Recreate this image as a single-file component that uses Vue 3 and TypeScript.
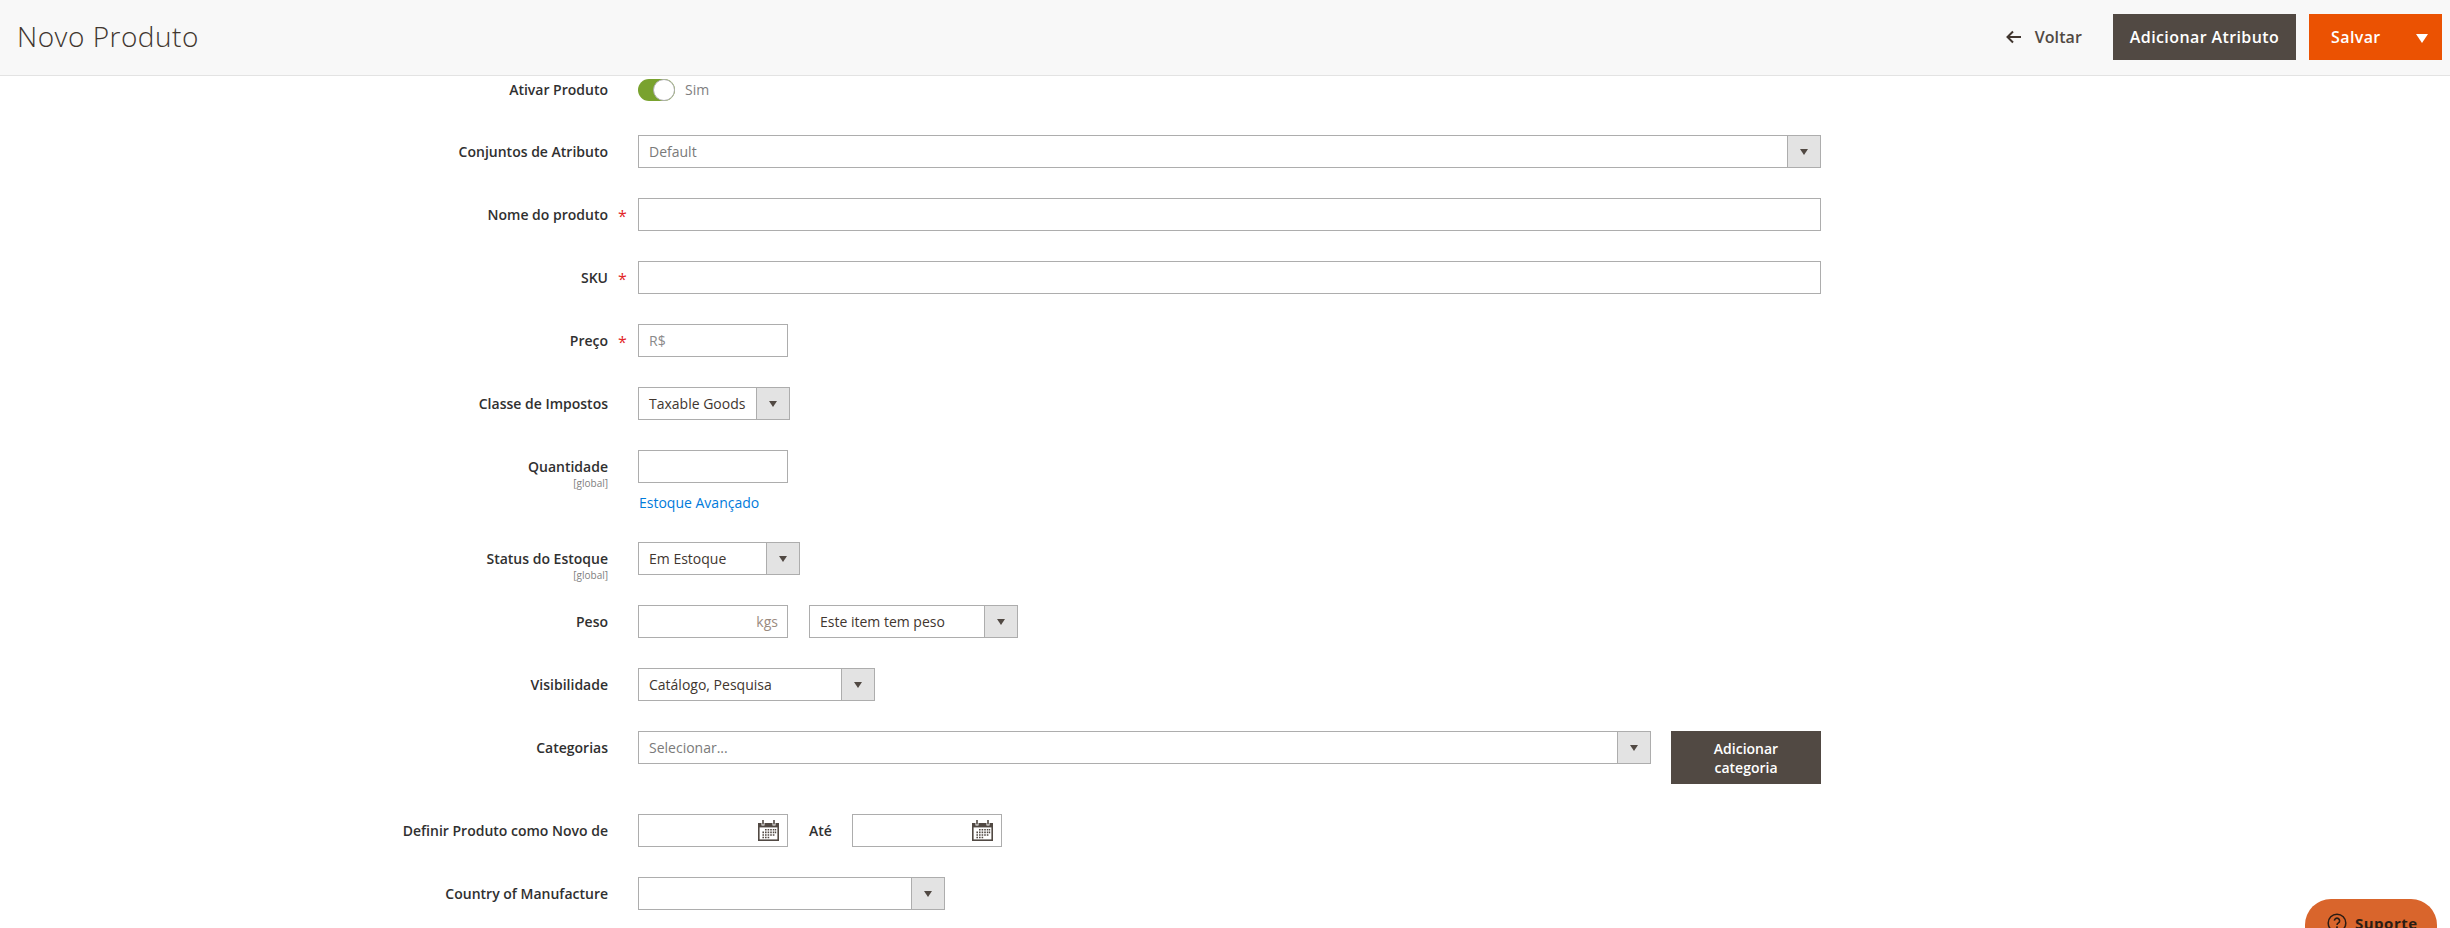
<template>
  <div class="page">
    <header class="page-header">
      <h1 class="title">Novo Produto</h1>
      <div class="actions">
        <a class="back">
          <svg class="back-icon" viewBox="0 0 15 14" width="15" height="14">
            <path d="M7 1.5 1.5 7 7 12.5M2 7h13" fill="none" stroke="#41362f" stroke-width="2" />
          </svg>
          <span>Voltar</span>
        </a>
        <button class="btn btn-dark btn-large">Adicionar Atributo</button>
        <button class="btn btn-save btn-large">
          <span>Salvar</span>
          <i class="save-arrow"></i>
        </button>
      </div>
    </header>

    <form class="form" @submit.prevent>
      <div class="row row-toggle">
        <label class="label">Ativar Produto</label>
        <span class="star"></span>
        <div class="control toggle-wrap">
          <span class="toggle"><i class="knob"></i></span>
          <span class="toggle-text">Sim</span>
        </div>
      </div>

      <div class="row">
        <label class="label">Conjuntos de Atributo</label>
        <span class="star"></span>
        <div class="select w-full">
          <span class="select-value muted">Default</span>
          <span class="select-btn"><i class="arrow"></i></span>
        </div>
      </div>

      <div class="row">
        <label class="label">Nome do produto</label>
        <span class="star">*</span>
        <input class="input w-full" type="text" />
      </div>

      <div class="row">
        <label class="label">SKU</label>
        <span class="star">*</span>
        <input class="input w-full" type="text" />
      </div>

      <div class="row">
        <label class="label">Preço</label>
        <span class="star">*</span>
        <div class="input w-small price">R$</div>
      </div>

      <div class="row">
        <label class="label">Classe de Impostos</label>
        <span class="star"></span>
        <div class="select w-tax">
          <span class="select-value">Taxable Goods</span>
          <span class="select-btn"><i class="arrow"></i></span>
        </div>
      </div>

      <div class="row">
        <div class="label">
          Quantidade
          <small class="scope">[global]</small>
        </div>
        <span class="star"></span>
        <div class="control stacked">
          <input class="input w-small" type="text" />
          <a class="link">Estoque Avançado</a>
        </div>
      </div>

      <div class="row">
        <div class="label">
          Status do Estoque
          <small class="scope">[global]</small>
        </div>
        <span class="star"></span>
        <div class="select w-stock">
          <span class="select-value">Em Estoque</span>
          <span class="select-btn"><i class="arrow"></i></span>
        </div>
      </div>

      <div class="row">
        <label class="label">Peso</label>
        <span class="star"></span>
        <div class="control inline gap-weight">
          <div class="input w-small weight">kgs</div>
          <div class="select w-has-weight">
            <span class="select-value">Este item tem peso</span>
            <span class="select-btn"><i class="arrow"></i></span>
          </div>
        </div>
      </div>

      <div class="row">
        <label class="label">Visibilidade</label>
        <span class="star"></span>
        <div class="select w-visible">
          <span class="select-value">Catálogo, Pesquisa</span>
          <span class="select-btn"><i class="arrow"></i></span>
        </div>
      </div>

      <div class="row">
        <label class="label">Categorias</label>
        <span class="star"></span>
        <div class="control inline w-full categories">
          <div class="select grow">
            <span class="select-value muted">Selecionar...</span>
            <span class="select-btn"><i class="arrow"></i></span>
          </div>
          <button class="btn btn-dark btn-category">Adicionar categoria</button>
        </div>
      </div>

      <div class="row">
        <label class="label">Definir Produto como Novo de</label>
        <span class="star"></span>
        <div class="control inline">
          <div class="input w-small date">
            <svg v-bind="calendar" class="cal">
              <use href="#cal-icon" />
            </svg>
          </div>
          <span class="until">Até</span>
          <div class="input w-small date">
            <svg v-bind="calendar" class="cal">
              <use href="#cal-icon" />
            </svg>
          </div>
        </div>
      </div>

      <div class="row">
        <label class="label">Country of Manufacture</label>
        <span class="star"></span>
        <div class="select w-country">
          <span class="select-value"></span>
          <span class="select-btn"><i class="arrow"></i></span>
        </div>
      </div>
    </form>

    <div class="support">
      <svg width="20" height="20" viewBox="0 0 20 20">
        <circle cx="10" cy="10" r="8.8" fill="none" stroke="#2a1c14" stroke-width="1.5" />
        <path d="M7.4 7.6a2.6 2.6 0 1 1 4 2.3c-.9.6-1.4 1-1.4 2.2" fill="none" stroke="#2a1c14" stroke-width="1.6" />
        <rect x="9.1" y="13.4" width="1.8" height="1.8" fill="#2a1c14" />
      </svg>
      <span>Suporte</span>
    </div>

    <svg class="defs" width="0" height="0">
      <symbol id="cal-icon" viewBox="0 0 21 21">
        <path fill="#514943" d="M0 3h3.5v2.5h3V3h8v2.5h3V3H21v18H0z" />
        <path fill="#514943" d="M4.2 0h1.6v4.6H4.2zM15.2 0h1.6v4.6h-1.6z" />
        <path fill="#fff" d="M1.6 7.4h17.8v12H1.6z" />
        <path fill="#514943" d="M7 9h1.6v1.6H7zM9.6 9h1.6v1.6H9.6zM12.2 9h1.6v1.6h-1.6zM14.8 9h1.6v1.6h-1.6zM17 9h1.2v1.6H17zM4.4 11.6H6v1.6H4.4zM7 11.6h1.6v1.6H7zM9.6 11.6h1.6v1.6H9.6zM12.2 11.6h1.6v1.6h-1.6zM14.8 11.6h1.6v1.6h-1.6zM17 11.6h1.2v1.6H17zM4.4 14.2H6v1.6H4.4zM7 14.2h1.6v1.6H7zM9.6 14.2h1.6v1.6H9.6zM12.2 14.2h1.6v1.6h-1.6zM14.8 14.2h1.6v1.6h-1.6zM4.4 16.8H6v1.4H4.4zM7 16.8h1.6v1.4H7zM9.6 16.8h1.6v1.4H9.6z" />
      </symbol>
    </svg>
  </div>
</template>

<script setup lang="ts">
const calendar = { width: 21, height: 21, viewBox: '0 0 21 21' };
</script>

<style>
html,
body {
  margin: 0;
  background: #fff;
  overflow: hidden;
}
</style>

<style scoped>
.page {
  position: relative;
  width: 2450px;
  height: 928px;
  overflow: hidden;
  font-family: "Open Sans", "Liberation Sans", sans-serif;
  font-size: 14px;
  color: #303030;
  box-sizing: border-box;
}

.page-header {
  display: flex;
  align-items: flex-start;
  justify-content: space-between;
  height: 76px;
  box-sizing: border-box;
  padding: 14px 8px 0 17px;
  background: #f8f8f8;
  border-bottom: 1px solid #e3e3e3;
}

.title {
  margin: 0;
  font-size: 28px;
  font-weight: 300;
  line-height: 44px;
  letter-spacing: 0.5px;
  color: #41362f;
}

.actions {
  display: flex;
  align-items: center;
}

.back {
  display: flex;
  align-items: center;
  gap: 14px;
  margin-right: 31px;
  font-size: 16px;
  font-weight: 600;
  color: #514943;
  letter-spacing: 0.1px;
}

.btn {
  border: 0;
  font-family: inherit;
  font-size: 14px;
  font-weight: 600;
  color: #fff;
  cursor: pointer;
}

.btn-large {
  font-size: 16px;
  letter-spacing: 0.4px;
}

.btn-dark {
  width: 183px;
  height: 46px;
  padding: 0;
  background: #514943;
}

.btn-save {
  display: flex;
  align-items: center;
  justify-content: space-between;
  width: 133px;
  height: 46px;
  margin-left: 13px;
  padding: 0 14px 0 22px;
  background: #eb5202;
}

.save-arrow {
  width: 0;
  height: 0;
  margin-top: 3px;
  border-left: 6px solid transparent;
  border-right: 6px solid transparent;
  border-top: 9px solid #fff;
}

.form {
  display: flex;
  flex-direction: column;
  gap: 30px;
  padding-top: 3px;
}

.row {
  display: grid;
  grid-template-columns: 608px 30px 1fr;
  align-items: start;
}

.row-toggle {
  height: 26px;
}

.label {
  height: 33px;
  box-sizing: border-box;
  padding-top: 7px;
  line-height: 19px;
  font-weight: 600;
  text-align: right;
  color: #303030;
}

.row-toggle .label {
  height: 26px;
  padding-top: 1px;
}

.scope {
  display: block;
  font-size: 10px;
  font-weight: 400;
  line-height: 14px;
  color: #808080;
}

.star {
  padding-top: 8px;
  padding-right: 1px;
  font-size: 16px;
  line-height: 20px;
  text-align: center;
  color: #e22626;
}

.toggle-wrap {
  display: flex;
  align-items: center;
  gap: 10px;
}

.toggle {
  position: relative;
  display: block;
  width: 37px;
  height: 22px;
  box-sizing: border-box;
  border-radius: 12px;
  background: #79a22e;
}

.knob {
  position: absolute;
  top: 0;
  right: 0;
  width: 22px;
  height: 22px;
  box-sizing: border-box;
  border: 1px solid #adadad;
  border-radius: 50%;
  background: #fff;
}

.toggle-text {
  margin-top: -2px;
  color: #808080;
}

.control.inline {
  display: flex;
  align-items: flex-start;
}

.stacked {
  display: flex;
  flex-direction: column;
  align-items: flex-start;
}

.input {
  display: block;
  height: 33px;
  box-sizing: border-box;
  border: 1px solid #adadad;
  background: #fff;
  font-family: inherit;
  font-size: 14px;
  outline: 0;
}

.w-full {
  width: 1183px;
}

.w-small {
  width: 150px;
}

.price {
  padding-left: 10px;
  line-height: 31px;
  color: #8a8a8a;
}

.weight {
  padding-right: 9px;
  line-height: 31px;
  text-align: right;
  color: #9a8a80;
}

.link {
  margin: 10px 0 0 1px;
  line-height: 19px;
  color: #007bdb;
}

.select {
  display: flex;
  height: 33px;
  box-sizing: border-box;
  border: 1px solid #adadad;
  background: #fff;
}

.select-value {
  flex: 1;
  padding-left: 10px;
  line-height: 31px;
  white-space: nowrap;
  color: #41362f;
}

.select-value.muted {
  color: #7a7a7a;
}

.select-btn {
  display: flex;
  align-items: center;
  justify-content: center;
  width: 32px;
  border-left: 1px solid #adadad;
  background: #e3e3e3;
}

.arrow {
  width: 0;
  height: 0;
  border-left: 4.5px solid transparent;
  border-right: 4.5px solid transparent;
  border-top: 6px solid #514943;
}

.w-tax {
  width: 152px;
}

.w-stock {
  width: 162px;
}

.w-has-weight {
  width: 209px;
}

.w-visible {
  width: 237px;
}

.w-country {
  width: 307px;
}

.gap-weight {
  gap: 21px;
}

.categories {
  gap: 20px;
}

.grow {
  flex: 1;
}

.btn-category {
  flex: none;
  width: 150px;
  height: 53px;
  padding: 0 30px;
  line-height: 19px;
}

.date {
  position: relative;
  display: flex;
  align-items: center;
  justify-content: flex-end;
  padding-right: 8px;
}

.until {
  width: 64px;
  padding-left: 21px;
  box-sizing: border-box;
  line-height: 33px;
  font-weight: 600;
}

.support {
  position: absolute;
  left: 2305px;
  top: 899px;
  display: flex;
  align-items: flex-start;
  gap: 8px;
  width: 132px;
  height: 60px;
  box-sizing: border-box;
  padding: 14px 0 0 22px;
  border-radius: 26px;
  background: #d9652c;
  font-size: 15px;
  font-weight: 700;
  line-height: 20px;
  letter-spacing: 0.5px;
  color: #2a1c14;
}

.defs {
  position: absolute;
}
</style>
